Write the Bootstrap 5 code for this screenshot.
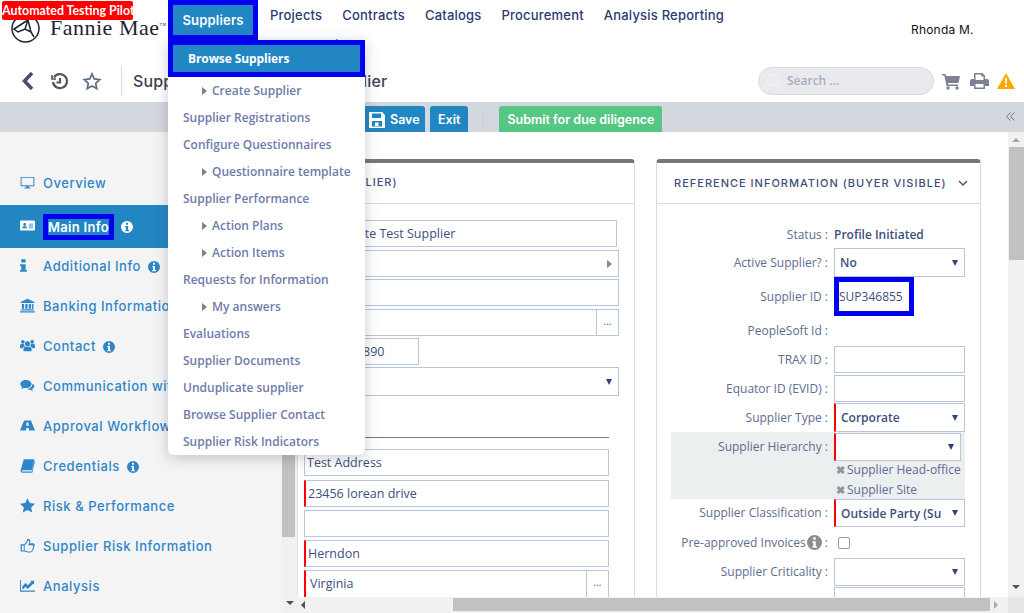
<!DOCTYPE html>
<html lang="en">
<head>
<meta charset="UTF-8">
<title>Supplier</title>
<link rel="stylesheet" href="https://cdn.jsdelivr.net/npm/bootstrap@5.3.2/dist/css/bootstrap.min.css">
<script src="https://cdn.jsdelivr.net/npm/bootstrap@5.3.2/dist/js/bootstrap.bundle.min.js"></script>
<style>
  html, body { height: 613px; overflow: hidden; }
  body { font-family: "Open Sans", "Liberation Sans", sans-serif; font-size: 12px; color: #3d4f7c; background: #fff; position: relative; }

  /* header */
  .hd-top { height: 66px; }
  .brand-col { width: 168px; padding: 14px 0 0 11px; }
  .brand-name { font-family: "Liberation Serif", serif; font-size: 22px; line-height: 27px; color: #1d2433; margin-left: 10px; letter-spacing: .5px; white-space: nowrap; }
  .brand-name sup { font-size: 4px; top: -2.2em; }
  .auto-tag { position: absolute; left: 2px; top: 1px; width: 131px; height: 19px; background: #f00; color: #fff; border-radius: 2px; font: 700 12.4px/19px Lato, sans-serif; text-align: center; white-space: nowrap; z-index: 30; }
  .main-nav { width: 590px; align-content: flex-start; }
  .main-nav .nav-link { padding: 0; font: 500 13px/30px Inter, sans-serif; letter-spacing: .2px; color: #2c3a73; white-space: nowrap; }
  .main-nav .nav-box { width: 90px; height: 40px; background: #2286c3; border: 5px solid #0000f0; color: #fff; font: 600 13px/30px Inter, sans-serif; text-align: center; }
  .main-nav .nav-wrap-item { margin-top: -3px; margin-left: 130px; line-height: 16px; }
  .user-name { margin-left: 153px; padding-top: 21px; font: 400 12px/18px Inter, sans-serif; letter-spacing: .2px; color: #111; white-space: nowrap; }
  .hd-title { height: 36px; padding: 0 0 6px 22px; }
  .hd-sep { width: 1px; height: 30px; background: #d9dce2; margin: 0 11px 0 19px; }
  .page-name { font: 500 16px/22px Inter, sans-serif; letter-spacing: .15px; color: #3d4350; white-space: nowrap; width: 254px; }
  .search-pill { width: 176px; height: 28px; margin-left: 371px; border: 1px solid #d5d9e0; border-radius: 14px; background: #e9eaed; color: #a9acc0; font-weight: 600; padding-left: 7px; }

  /* toolbar */
  .tool-bar { height: 30px; background: #d3d7de; padding-left: 355px; padding-right: 9px; }
  .tool-btn { height: 26px; margin-top: 4px; padding: 2px 8px 0; border: 0; border-radius: 3px 3px 0 0; background: #2286c3; color: #fff; font: 600 12.5px/24px Inter, sans-serif; white-space: nowrap; }
  .tool-btn:hover { background: #2286c3; color: #fff; }
  .tool-save { width: 70px; padding-left: 14px; padding-right: 4px; gap: 5px; }
  .tool-exit { margin-left: 5px; }
  .tool-go { background: #55c783; }
  .tool-go:hover { background: #55c783; }
  .tool-sep { width: 1px; height: 12px; background: #c6cad1; margin: 12px 15px 0 15px; }
  .tool-fold { margin-top: 10px; }

  /* body */
  .work { height: 481px; }
  .side-col { width: 282px; flex: none; background: #f4f4f4; padding-top: 31px; overflow: hidden; }
  .side-item { height: 40px; padding-left: 20px; font: 500 13px/40px Inter, sans-serif; letter-spacing: .55px; color: #2e86c8; white-space: nowrap; }
  .side-item svg.ico { width: 15px; height: 15px; margin-right: 8px; vertical-align: -2px; fill: #2e86c8; }
  .side-item svg.inf { width: 12px; height: 12px; margin-left: 7px; vertical-align: -2px; fill: #2e86c8; }
  .side-on { height: 43px; margin: 2px 0 -2px; background: #2286c3; color: #fff; line-height: 43px; }
  .side-item.side-on svg.ico, .side-item.side-on svg.inf { fill: #fff; }
  .side-mark { display: inline-block; height: 26px; border: 5px solid #0000f0; font-weight: 600; letter-spacing: .3px; line-height: 16px; vertical-align: middle; }
  .track-v { width: 15px; flex: none; background: #f1f1f1; }
  .thumb-left { margin-top: 18px; height: 387px; width: 13px; background: #c1c1c1; }
  .arr { width: 0; height: 0; border: 4px solid transparent; }
  .arr-d { border-top-color: #505050; border-bottom: 0; margin: 0 auto; }
  .arr-u { border-bottom-color: #a8a8a8; border-top: 0; margin: 0 auto; }
  .arr-l { border-right-color: #505050; border-left: 0; }
  .arr-r { border-left-color: #a8a8a8; border-right: 0; }

  .pane { min-width: 0; flex: 1; }
  .pane-row { height: 465px; overflow: hidden; }
  .pane-main { flex: 1; min-width: 0; border-left: 1px solid #e3e3e3; border-radius: 0 6px 0 0; padding-top: 27px; overflow: hidden; }
  .track-r { width: 16px; flex: none; background: #f1f1f1; padding-top: 6px; }
  .thumb-right { width: 15px; margin: 5px 0 0 1px; height: 113px; background: #c1c1c1; }
  .track-b { height: 16px; background: #f1f1f1; }
  .thumb-bot { width: 537px; height: 13px; margin: 1px 0 0 148px; background: #c1c1c1; }
  .track-end { width: 16px; height: 16px; background: #e6e6e6; }

  .sheet { border: 1px solid #d5dce8; border-top: 4px solid #777; border-radius: 4px 4px 0 0; background: #fff; flex: none; --bs-card-bg: #fff; }
  .sheet-a { width: 337px; border-left: 0; border-radius: 0 4px 0 0; }
  .sheet-b { width: 325px; margin-left: 21px; }
  .sheet-head { height: 41px; padding: 0 0 0 17px; background: #fff; border-bottom: 1px solid #d5dce8; font: 500 11px/39px Inter, sans-serif; letter-spacing: 1px; color: #3d4f7c; white-space: nowrap; }
  .sheet-a .sheet-head { padding-left: 0; }
  .head-tail { margin-left: 29px; }
  .body-a { padding: 16px 0 0 6px; }
  .body-b { padding: 21px 0 0 14px; }

  .fld { height: 27px; padding: 0 2px; border: 1px solid #b9c5d8; border-radius: 0; font-size: 12.5px; font-weight: 500; line-height: 25px; color: #3d4f7c; background: #fff; white-space: nowrap; overflow: hidden; }
  .fld-req { border-left: 2px solid #f00; }
  .fld-btn { padding: 0; }
  .ell-btn { flex: none; width: 22px; border-left: 1px solid #b9c5d8; text-align: center; font-size: 10px; line-height: 22px; color: #555; }
  .w-a { width: 313px; }
  .w-b { width: 305px; }
  .w-full { width: 315px; }
  .w-short { width: 115px; }
  .fld-name { padding-left: 12px; }
  .fld-phone { padding-left: 8px; }
  .fld-tall { height: 29px; }
  .fld-end { padding-right: 6px; }
  .gap-1px { margin-bottom: 1px; }
  .gap-2px { margin-bottom: 2px; }
  .gap-3px { margin-bottom: 3px; }
  .gap-4px { margin-bottom: 4px; }
  .rule-space { height: 41px; }
  .rule-after { height: 11px; }
  .rule-a { width: 305px; height: 1px; background: #777; }
  .val-ind { padding-left: 4px; }
  .caret-d { width: 0; height: 0; border-left: 3.5px solid transparent; border-right: 3.5px solid transparent; border-top: 6px solid #2f4378; flex: none; }
  .caret-r { width: 0; height: 0; border-top: 4px solid transparent; border-bottom: 4px solid transparent; border-left: 5px solid #8a8a8a; flex: none; }

  .f-row { width: 294px; }
  .f-h20 { height: 20px; margin-bottom: 3px; }
  .f-h30 { height: 30px; }
  .f-h31 { height: 31px; }
  .f-lab { width: 163px; flex: none; padding-right: 6px; text-align: right; font-size: 12px; color: #5d6d8e; white-space: nowrap; }
  .f-lab-top { padding-top: 5px; line-height: 20px; }
  .f-val { width: 131px; flex: none; }
  .sel-val { height: 29px; padding: 0 6px 0 5px; font-size: 12px; font-weight: 600; }
  .sel-h28 { height: 28px; }
  .sel-cut { width: 100px; overflow: hidden; }
  .sel-hier { width: 127px; height: 28px; margin: 1px 0 -1px; }
  .sup-box { width: 80px; height: 39px; border: 5px solid #0000f0; line-height: 29px; font-size: 12px; white-space: nowrap; }
  .hier-box { width: 294px; height: 67px; background: #ebeff0; }
  .x-tag { height: 20px; line-height: 20px; font-size: 12px; color: #5d6d8e; white-space: nowrap; padding-left: 2px; }
  .x-tag b { color: #8f9296; font-size: 11px; margin-right: 2px; }
  .chk-box { width: 12px; height: 12px; border: 1px solid #9a9a9a; border-radius: 2px; background: #fff; margin-left: 4px; }
  .lab-info { vertical-align: -3px; margin-left: 1px; fill: #8d8d8d; }
  .mt-1px { margin-top: 1px; }

  /* dropdown over the page */
  .sup-menu { position: absolute; left: 168px; top: 40px; width: 197px; height: 415px; margin: 0; padding: 0; border: 0; border-radius: 0 0 6px 6px; box-shadow: 0 3px 14px rgba(60,70,90,.28); background: #fff; z-index: 20; display: block; }
  .sup-menu a { display: block; height: 27px; padding-left: 15px; font: 600 12px/27px "Open Sans", sans-serif; color: #6f7bab; white-space: nowrap; text-decoration: none; }
  .sup-menu a.sub { padding-left: 34px; }
  .sup-menu a.sub i { display: inline-block; border-top: 4px solid transparent; border-bottom: 4px solid transparent; border-left: 5px solid #7d8090; margin-right: 5px; }
  .sup-menu a.hot { height: 37px; padding-left: 15px; border: 5px solid #0000f0; background: #2286c3; color: #fff; line-height: 27px; font-weight: 700; letter-spacing: -.1px; }
  .ms-hist { margin-left: 16px; }
  .ms-star { margin-left: 13px; }
  .ms-print { margin-left: 10px; }
  .ms-warn { margin-left: 8px; }
</style>
</head>
<body>

<svg width="0" height="0" class="position-absolute">
  <symbol id="i-info" viewBox="0 0 24 24"><path fill-rule="evenodd" d="M12 0a12 12 0 1 0 0 24 12 12 0 0 0 0-24zM10 3.500h4v4h-4zM8.500 10h5.500v8H16v2.500H8.500V18H10v-5.500H8.500z"/></symbol>
  <symbol id="i-screen" viewBox="0 0 24 24"><path fill-rule="evenodd" d="M1 3h22v15H14v2h3v1.500H7V20h3v-2H1zM2.500 4.500v12h19v-12z"/></symbol>
  <symbol id="i-card" viewBox="0 0 24 18"><path fill-rule="evenodd" d="M1.500 1h21A1.500 1.500 0 0 1 24 2.500v13a1.500 1.500 0 0 1-1.500 1.500h-21A1.500 1.500 0 0 1 0 15.500v-13A1.500 1.500 0 0 1 1.500 1zM7.500 5a2.300 2.300 0 1 0 0 4.600 2.300 2.300 0 0 0 0-4.600zM3.500 13.500h8c0-2.500-1.500-3.400-4-3.400s-4 .9-4 3.400zM14 6v1.500h7V6zM14 9v1.500h7V9zM14 12v1.500h7V12z"/></symbol>
  <symbol id="i-i" viewBox="0 0 24 24" preserveAspectRatio="xMinYMid"><path d="M2 2h7v5H2zM0 10h9v9h2v3H0v-3h2v-6H0z"/></symbol>
  <symbol id="i-bank" viewBox="0 0 24 24"><path d="M12 1 1 6.500V8h22V6.500zM3 9.500h3.500V17H3zM8.500 9.500H12V17H8.500zM14 9.500h3.500V17H14zM19 9.500h2.500V17H19zM2 18h20v2H2zM0 21h24v2H0z"/></symbol>
  <symbol id="i-users" viewBox="0 0 24 24"><circle cx="12" cy="9" r="4"/><circle cx="4.500" cy="6" r="3"/><circle cx="19.500" cy="6" r="3"/><path d="M5.500 21v-3.500c0-2.500 2-3.500 3.500-3.500h6c1.500 0 3.500 1 3.500 3.500V21zM0 15v-3c0-1.500 1-2.500 2.500-2.500h4c.3 2 1 3 1.800 3.500C6 13.500 4.500 15 4 16.500 2 16.500 0 16 0 15zM24 15v-3c0-1.500-1-2.500-2.500-2.500h-4c-.3 2-1 3-1.800 3.500 2.300.5 3.800 2 4.300 3.500 2 0 4-.5 4-1.500z"/></symbol>
  <symbol id="i-chat" viewBox="0 0 24 24"><path d="M9.500 3C4.500 3 .5 5.800.5 9.500c0 2 1.200 3.700 3 4.900L2.200 18l4.300-2.400c1 .2 2 .4 3 .4 5 0 9-2.900 9-6.500S14.500 3 9.500 3z"/><path d="M20 9.500c0 4-3.500 7.200-8.500 7.900 1.300.8 3 1.200 4.800 1.200l4.200 2.400-1.200-3.300c2.200-1.100 3.700-2.900 3.700-4.700 0-1.500-1-2.900-3-3.800z"/></symbol>
  <symbol id="i-road" viewBox="0 0 24 24"><path fill-rule="evenodd" d="M6.500 4h11L24 20h-9.500l-.5-4h-4l-.5 4H0zM10.500 7l-.4 5.500h3.800L13.500 7z"/></symbol>
  <symbol id="i-book" viewBox="0 0 24 24"><path fill-rule="evenodd" d="M6 2h17l-4 17.500H4.500c-1 0-1.500.5-1.500 1s.5 1 1.500 1H19l4-17 1 1L20 22.500c0 .5-.5 1-1 1H4c-2 0-3.500-1.500-3-3.500z"/></symbol>
  <symbol id="i-star" viewBox="0 0 24 24"><path d="M12 .5l3.600 7.600 8.400 1.100-6.100 5.800 1.500 8.300-7.400-4-7.400 4 1.500-8.300L0 9.200l8.400-1.100z"/></symbol>
  <symbol id="i-thumb" viewBox="0 0 24 24"><path fill-rule="evenodd" d="M13 1c2.500 0 3.500 2 3.500 4 0 1.500-.5 2.500-1 3.500h5c1.800 0 3 1.200 3 2.800 0 1-.5 1.700-.8 2.200.3 1.500-.2 2.500-1 3.200.2 1.500-.3 2.700-1.500 3.300 0 1.800-1.400 3-3.700 3H13c-2.500 0-4.500-1-5.500-1.500H1V10h6c1.500-1.200 3-3.500 3.700-5.500C11 2.500 11.500 1 13 1zM13 3c-.5 1-.8 2-1.200 3-.8 2-2.400 4.300-4.300 5.800V20c1.500.5 3.200 1.500 5.500 1.500h4.200c1.500 0 2-1 1.500-2.200 1.200-.3 1.700-1.300 1-2.400 1-.4 1.500-1.600.8-2.600.8-.5 1-2.800-.5-2.800h-7c.8-2 1.800-3 1.800-5 0-1.500-.5-2.500-1.800-3.500zM3 12v8h3v-8z"/></symbol>
  <symbol id="i-chart" viewBox="0 0 24 24"><path d="M0 3h1.500v17H24v2H0z"/><path d="M3.500 17.500V14l5-6 4 3.500L18 6l-1.500-1.500H22.500V10.500L21 9l-8.500 8.500L8.500 14 5 18z"/></symbol>
</svg>

<div class="auto-tag">Automated Testing Pilot</div>

<header>
  <div class="hd-top d-flex">
    <div class="brand-col d-flex align-items-start flex-shrink-0">
      <svg class="flex-shrink-0" width="29" height="29" viewBox="0 0 29 29" fill="none" stroke="#1d2433" stroke-width="1.500"><circle cx="14.500" cy="14.500" r="13.500"/><path d="M3 15 17 6l3 12-6-3-7 3zM17 6l-3 9M20 18l3 5"/></svg>
      <span class="brand-name">Fannie Mae<sup>TM</sup></span>
    </div>
    <nav class="main-nav nav flex-wrap">
      <a class="nav-box nav-link" href="#">Suppliers</a>
      <a class="nav-link ms-2 ps-1" href="#">Projects</a>
      <a class="nav-link ms-3 ps-1" href="#">Contracts</a>
      <a class="nav-link ms-3 ps-1" href="#">Catalogs</a>
      <a class="nav-link ms-3 ps-1" href="#">Procurement</a>
      <a class="nav-link ms-3 ps-1" href="#">Analysis Reporting</a>
      <a class="nav-link nav-wrap-item" href="#">Sourcing</a>
    </nav>
    <div class="user-name">Rhonda M.</div>
  </div>
  <div class="hd-title d-flex align-items-center">
    <svg width="13" height="18" viewBox="0 0 13 18"><path d="M10 1 2.500 9l7.500 8" fill="none" stroke="#4b4a72" stroke-width="3.500"/></svg>
    <svg class="ms-hist" width="18" height="17" viewBox="0 0 18 17" fill="none" stroke="#5f4f5f" stroke-width="2.200"><path d="M3 4.500A7 7 0 1 1 2 9"/><path d="M9 5v4.500H5.500"/><path d="M1 2v4h4" stroke-width="1.600"/></svg>
    <svg class="ms-star" width="20" height="19" viewBox="0 0 24 24" fill="none" stroke="#5f6c85" stroke-width="2.200"><path d="M12 2.500l2.900 6.200 6.800.9-5 4.700 1.300 6.700-6-3.300-6 3.300 1.300-6.700-5-4.700 6.800-.9z"/></svg>
    <div class="hd-sep"></div>
    <div class="page-name">Supplier Corporate Test Supplier</div>
    <div class="search-pill d-flex align-items-center gap-1">
      <svg width="17" height="17" viewBox="0 0 17 17" fill="none" stroke="#eef0f6" stroke-width="1.500"><circle cx="7" cy="7" r="5.500"/><path d="m11 11 5 5"/></svg>
      <span>Search ...</span>
    </div>
    <svg class="ms-2" width="18" height="17" viewBox="0 0 18 17" fill="#7c8198"><path d="M0 1h3.500l.5 2h14l-1.500 7H6l.3 1.500H16V13H4.500L2.300 2.500H0z"/><circle cx="6" cy="15" r="1.700"/><circle cx="15" cy="15" r="1.700"/></svg>
    <svg class="ms-print" width="19" height="18" viewBox="0 0 19 18" fill="#7c8198"><path fill-rule="evenodd" d="M4 1h8.500L15 3.500V7h2c1.200 0 2 .8 2 2v5h-4v3H4v-3H0V9c0-1.200.8-2 2-2h2zM5.500 2.500V8h8V4.500h-2.200V2.500zM5.500 12v3.500h8V12z"/></svg>
    <svg class="ms-warn" width="18" height="16" viewBox="0 0 18 16"><path d="M9 0 18 16H0z" fill="#fca800"/><path d="M8 5h2l-.3 6H8.300zM8 12h2v2H8z" fill="#fff"/></svg>
  </div>
</header>

<div class="tool-bar d-flex">
  <button class="tool-btn tool-save btn d-flex align-items-center" type="button">
    <svg class="flex-shrink-0" width="16" height="16" viewBox="0 0 16 16" fill="#fff"><path fill-rule="evenodd" d="M0 0h13l3 3v13H0zM3 1.500V6h9V1.500zM3 9v5.500h10V9zM6 10.500h3.500V14H6z"/></svg>
    <span>Save</span>
  </button>
  <button class="tool-btn tool-exit btn" type="button">Exit</button>
  <div class="tool-sep"></div>
  <button class="tool-btn tool-go btn" type="button">Submit for due diligence</button>
  <svg class="tool-fold ms-auto" width="9" height="9" viewBox="0 0 9 9" fill="none" stroke="#6a7488" stroke-width="1"><path d="M4.500.5.500 4.500l4 4M8.500.5l-4 4 4 4"/></svg>
</div>

<div class="work d-flex">
  <aside class="side-col">
    <div class="side-item"><svg class="ico"><use href="#i-screen"/></svg>Overview</div>
    <div class="side-item side-on"><svg class="ico"><use href="#i-card"/></svg><span class="side-mark">Main Info</span><svg class="inf"><use href="#i-info"/></svg></div>
    <div class="side-item"><svg class="ico"><use href="#i-i"/></svg>Additional Info<svg class="inf"><use href="#i-info"/></svg></div>
    <div class="side-item"><svg class="ico"><use href="#i-bank"/></svg>Banking Information</div>
    <div class="side-item"><svg class="ico"><use href="#i-users"/></svg>Contact<svg class="inf"><use href="#i-info"/></svg></div>
    <div class="side-item"><svg class="ico"><use href="#i-chat"/></svg>Communication with supplier</div>
    <div class="side-item"><svg class="ico"><use href="#i-road"/></svg>Approval Workflow</div>
    <div class="side-item"><svg class="ico"><use href="#i-book"/></svg>Credentials<svg class="inf"><use href="#i-info"/></svg></div>
    <div class="side-item"><svg class="ico"><use href="#i-star"/></svg>Risk &amp; Performance</div>
    <div class="side-item"><svg class="ico"><use href="#i-thumb"/></svg>Supplier Risk Information</div>
    <div class="side-item"><svg class="ico"><use href="#i-chart"/></svg>Analysis</div>
  </aside>
  <div class="track-v d-flex flex-column">
    <div class="thumb-left"></div>
    <div class="arr arr-d mt-auto mb-2"></div>
  </div>
  <div class="pane d-flex flex-column">
    <div class="pane-row d-flex">
      <main class="pane-main d-flex align-items-start">
        <section class="sheet sheet-a card">
          <div class="sheet-head card-header"><span class="head-tail">(SUPPLIER)</span></div>
          <div class="body-a">
            <div class="fld w-a fld-name gap-3px">Corporate Test Supplier</div>
            <div class="fld w-full fld-end d-flex align-items-center justify-content-end gap-2px"><span class="caret-r"></span></div>
            <div class="fld w-full gap-3px"></div>
            <div class="fld w-full fld-btn d-flex justify-content-end gap-2px"><span class="ell-btn">...</span></div>
            <div class="fld w-short fld-phone gap-2px">1234567890</div>
            <div class="fld w-full fld-tall fld-end d-flex align-items-center justify-content-end"><span class="caret-d"></span></div>
            <div class="rule-space"></div>
            <div class="rule-a"></div>
            <div class="rule-after"></div>
            <div class="fld w-b gap-4px">Test Address</div>
            <div class="fld w-b fld-req gap-3px">23456 lorean drive</div>
            <div class="fld w-b gap-3px"></div>
            <div class="fld w-b fld-req gap-3px">Herndon</div>
            <div class="fld w-b fld-req fld-btn fld-tall d-flex justify-content-between"><span class="val-ind">Virginia</span><span class="ell-btn">...</span></div>
          </div>
        </section>
        <section class="sheet sheet-b card">
          <div class="sheet-head card-header d-flex justify-content-between align-items-center pe-2">
            <span>REFERENCE INFORMATION (BUYER VISIBLE)</span>
            <svg class="me-1" width="10" height="7" viewBox="0 0 10 7" fill="none" stroke="#3d4f7c" stroke-width="1.300"><path d="m1 1 4 4 4-4"/></svg>
          </div>
          <div class="body-b">
            <div class="f-row f-h20 d-flex align-items-center"><div class="f-lab">Status :</div><div class="f-val fw-semibold">Profile Initiated</div></div>
            <div class="f-row d-flex align-items-center"><div class="f-lab">Active Supplier? :</div><div class="f-val fld sel-val d-flex align-items-center justify-content-between">No<span class="caret-d"></span></div></div>
            <div class="f-row d-flex align-items-center"><div class="f-lab">Supplier ID :</div><div class="sup-box">SUP346855</div></div>
            <div class="f-row f-h30 d-flex align-items-center"><div class="f-lab">PeopleSoft Id :</div></div>
            <div class="f-row gap-2px d-flex align-items-center"><div class="f-lab">TRAX ID :</div><div class="f-val fld"></div></div>
            <div class="f-row gap-1px d-flex align-items-center"><div class="f-lab">Equator ID (EVID) :</div><div class="f-val fld"></div></div>
            <div class="f-row d-flex align-items-center"><div class="f-lab">Supplier Type :</div><div class="f-val fld fld-req sel-val d-flex align-items-center justify-content-between">Corporate<span class="caret-d"></span></div></div>
            <div class="hier-box d-flex">
              <div class="f-lab f-lab-top">Supplier Hierarchy :</div>
              <div>
                <div class="fld fld-req sel-val sel-hier d-flex align-items-center justify-content-end"><span class="caret-d"></span></div>
                <div class="x-tag"><b>&#10006;</b>Supplier Head-office</div>
                <div class="x-tag"><b>&#10006;</b>Supplier Site</div>
              </div>
            </div>
            <div class="f-row d-flex align-items-center"><div class="f-lab">Supplier Classification :</div><div class="f-val fld fld-req sel-val sel-h28 d-flex align-items-center justify-content-between"><span class="sel-cut">Outside Party (Su</span><span class="caret-d"></span></div></div>
            <div class="f-row f-h31 d-flex align-items-center"><div class="f-lab">Pre-approved Invoices<svg class="lab-info" width="15" height="15"><use href="#i-info"/></svg> :</div><div class="chk-box"></div></div>
            <div class="f-row d-flex align-items-center"><div class="f-lab">Supplier Criticality :</div><div class="f-val fld sel-val sel-h28 d-flex align-items-center justify-content-end"><span class="caret-d"></span></div></div>
            <div class="f-row mt-1px d-flex"><div class="f-lab"></div><div class="f-val fld"></div></div>
          </div>
        </section>
      </main>
      <div class="track-r d-flex flex-column">
        <div class="arr arr-u"></div>
        <div class="thumb-right"></div>
        <div class="arr arr-d mt-auto mb-2"></div>
      </div>
    </div>
    <div class="track-b d-flex">
      <div class="arr arr-l mt-1 ms-1"></div>
      <div class="thumb-bot"></div>
      <div class="arr arr-r mt-1 ms-1"></div>
      <div class="track-end ms-auto"></div>
    </div>
  </div>
</div>

<div class="sup-menu dropdown-menu">
  <a class="hot" href="#">Browse Suppliers</a>
  <a class="sub" href="#"><i></i>Create Supplier</a>
  <a href="#">Supplier Registrations</a>
  <a href="#">Configure Questionnaires</a>
  <a class="sub" href="#"><i></i>Questionnaire template</a>
  <a href="#">Supplier Performance</a>
  <a class="sub" href="#"><i></i>Action Plans</a>
  <a class="sub" href="#"><i></i>Action Items</a>
  <a href="#">Requests for Information</a>
  <a class="sub" href="#"><i></i>My answers</a>
  <a href="#">Evaluations</a>
  <a href="#">Supplier Documents</a>
  <a href="#">Unduplicate supplier</a>
  <a href="#">Browse Supplier Contact</a>
  <a href="#">Supplier Risk Indicators</a>
</div>

</body>
</html>
